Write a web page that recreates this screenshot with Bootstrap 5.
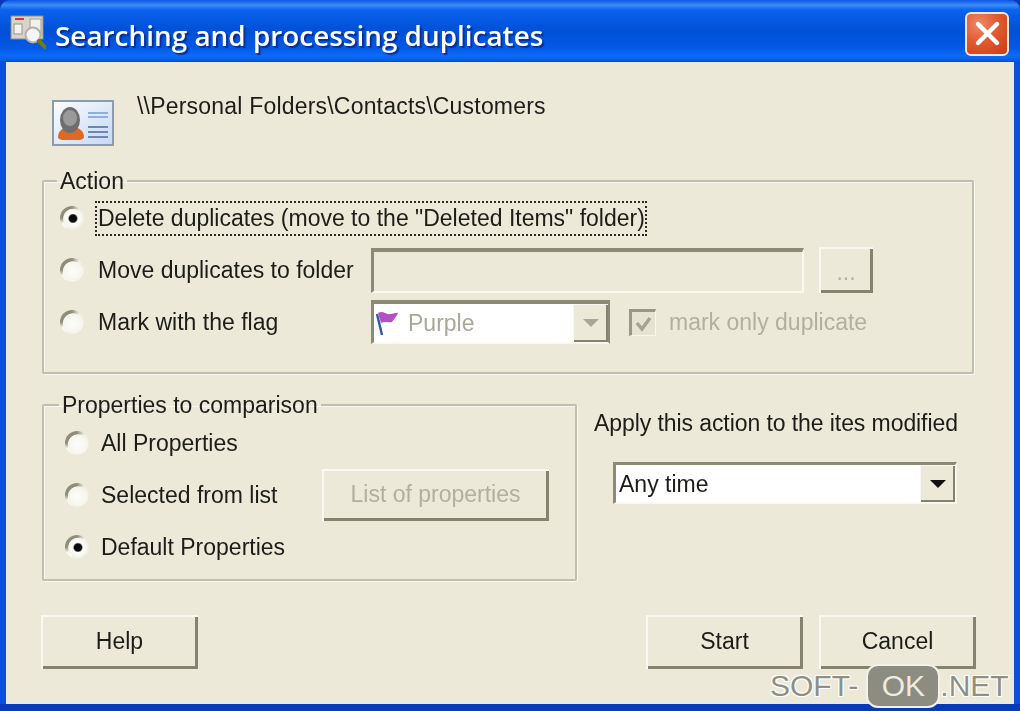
<!DOCTYPE html>
<html lang="en">
<head>
<meta charset="utf-8">
<title>Searching and processing duplicates</title>
<link href="https://cdn.jsdelivr.net/npm/bootstrap@5.3.0/dist/css/bootstrap.min.css" rel="stylesheet">
<style>
html,body{margin:0;height:711px;overflow:hidden;background:#0a3ab8}
body{font-family:"Liberation Sans",sans-serif;font-size:23px;line-height:26px;color:#1c1c18}
.xp-win{position:relative;width:1020px;height:711px;background:#0a4fe0;border-radius:10px 10px 0 0}
.xp-title{height:62px;padding:8px 11px 0 10px;background:linear-gradient(180deg,#0a55e6 0,#3d8cf5 5px,#0a62ee 10px,#0050d8 30px,#0459e4 48px,#0a6cfa 56px,#0858e0 61px,#0a3fc0 62px);border-radius:10px 10px 0 0}
.xp-appicon{margin-top:-6px;flex:none}
.xp-title-text{font-family:"Open Sans","Noto Sans",sans-serif;font-weight:600;font-size:27.9px;line-height:32px;color:#fff;text-shadow:2px 2px 1px #0a2f96;margin-left:9px;margin-top:-1px;white-space:nowrap}
.xp-close{width:44px;height:44px;padding:0;border:2px solid #f3e6de;border-radius:6px;background:radial-gradient(circle at 30% 25%,#ee8a68 0,#e05a32 45%,#cc3c10 100%);margin-top:-3px}
.xp-pane{height:642px;margin:0 6px;background:#ece9d8;padding:38px 38px 0 36px}
.xp-soft{filter:blur(.5px)}
.xp-foot{height:7px;background:#0a3ab8}
.xp-head{margin-left:10px;height:46px;margin-bottom:23px}
.xp-path{margin-left:23px;margin-top:-7px;white-space:nowrap;letter-spacing:.2px}
.xp-group{border:2px solid #c0bfae;box-shadow:inset 1px 1px 0 #f8f7f0,1px 1px 0 #f8f7f0;border-radius:2px;margin:0}
.xp-group>legend{float:none;width:auto;font-size:23px;line-height:24px;padding:0 3px}
.xp-action{padding:0 0 24px 16px;width:932px}
.xp-action>legend{margin:0 0 -1px -3px}
.xp-props{padding:0 0 6px 21px;width:535px;flex:none}
.xp-props>legend{margin:0 0 0 -6px}
.xp-row{height:52px}
input.xp-radio{appearance:none;-webkit-appearance:none;flex:none;width:24px;height:24px;margin:0;border:0;border-radius:50%;background:radial-gradient(circle at 54% 56%,#fdfdf9 0,#f6f5ec 52%,transparent 56%),conic-gradient(from 210deg,#f8f8f1 0 30deg,#8f8e7a 60deg 150deg,#f0efe5 190deg 360deg)}
input.xp-radio:checked{background:radial-gradient(circle at 54% 52%,#0b0b0b 0,#0b0b0b 20%,#fdfdf9 28%,#f6f5ec 52%,transparent 56%),conic-gradient(from 210deg,#f8f8f1 0 30deg,#8f8e7a 60deg 150deg,#f0efe5 190deg 360deg)}
.xp-lbl{margin-left:14px;white-space:nowrap}
.xp-props .xp-lbl{margin-left:12px}
.xp-lblwide{width:257px}
.xp-lblmid{width:221px}
.xp-focus{outline:2px dotted #2a2a24;outline-offset:0;padding:2px 0 3px 1px;margin-left:13px;white-space:nowrap}
.xp-sunken{border-style:solid;border-width:4px 2px 2px 3px;border-color:#8b8a76 #f8f7f0 #f8f7f0 #8b8a76;border-radius:0}
input.xp-field{height:45px;width:433px;background:#ece9d8;flex:none;margin-left:16px}
input.xp-field:disabled{background:#ece9d8}
.xp-btn{--bs-btn-font-size:23px;--bs-btn-line-height:26px;--bs-btn-padding-x:0;--bs-btn-padding-y:0;--bs-btn-color:#1c1c18;--bs-btn-bg:#ece9d8;--bs-btn-border-width:0;--bs-btn-border-radius:0;--bs-btn-disabled-color:#b1b0a0;--bs-btn-disabled-bg:#ece9d8;--bs-btn-disabled-opacity:1;box-shadow:inset 2px 2px 0 #f9f8f2,inset -3px -3px 0 #85836f;font-family:inherit;padding-bottom:2px}
.xp-dots{width:54px;height:46px;margin-left:15px;padding-top:6px!important;flex:none}
.xp-combo{display:flex;background:#fff;flex:none}
.xp-flagged{width:239px;height:44px;margin-left:16px;border-color:#8b8a76 #8b8a76 #f8f7f0 #8b8a76}
.xp-flagged .xp-val{color:#a9a898;display:flex;align-items:center;gap:8px;padding-left:2px}
.xp-any{width:344px;height:42px;margin-left:19px;margin-top:26px;border-width:3px 2px 2px 3px}
.xp-any .xp-val{display:flex;align-items:center;padding-left:3px}
.xp-arrow{margin-left:auto;width:35px;background:#ece9d8;box-shadow:inset 1px 1px 0 #f9f8f2,inset -2px -2px 0 #85836f;display:flex;align-items:center;justify-content:center}
.xp-tri{width:0;height:0;border-left:8px solid transparent;border-right:8px solid transparent;border-top:8px solid #111}
.xp-tri-off{border-top-color:#a9a898}
input.xp-check{appearance:none;-webkit-appearance:none;flex:none;width:27px;height:27px;margin:0 0 0 19px;border-style:solid;border-width:3px 1px 1px 3px;border-color:#98978a #f8f7f0 #f8f7f0 #98978a;border-radius:0;background-color:#e6e3d3;background-image:url("data:image/svg+xml,%3Csvg xmlns='http://www.w3.org/2000/svg' viewBox='0 0 23 23'%3E%3Cpath d='M5 11l5 6 8-11' fill='none' stroke='%23a3a294' stroke-width='3.4'/%3E%3C/svg%3E")}
.xp-muted{color:#b1b0a0;margin-left:13px;white-space:nowrap}
.xp-mid{margin-top:19px}
.xp-right{margin-left:17px;padding-top:17px}
.xp-applylbl{white-space:nowrap;letter-spacing:-.08px}
.xp-bottom{margin-top:34px;margin-left:-1px}
.xp-bigbtn{width:157px;height:54px}
.xp-list{width:227px;height:52px;flex:none}
.xp-mark{position:absolute;left:770px;top:664px;height:44px;display:flex;align-items:center;font-family:"Liberation Sans",sans-serif;font-size:30px;color:#8f8f83;text-shadow:-1px -1px 0 #fff,1px -1px 0 #fff,-1px 1px 0 #fff,1px 1px 0 #fff}
.xp-pill{width:74px;height:44px;margin:0 0 0 8px;background:#8d8c80;border:2px solid #f2f1ea;border-radius:12px;color:#ecebdf;text-shadow:none;text-align:center;line-height:40px}
</style>
</head>
<body>
<div class="xp-win">
  <div class="xp-title xp-soft d-flex align-items-center">
    <svg class="xp-appicon" width="36" height="36" viewBox="0 0 36 36" aria-hidden="true">
      <rect x="1" y="2" width="32" height="23" fill="#d8d4cc" stroke="#8f8a84"/>
      <rect x="5" y="4" width="9" height="2" fill="#d8342a"/>
      <rect x="4" y="10" width="8" height="10" fill="#f4f2ee" stroke="#98938c"/>
      <rect x="20" y="5" width="11" height="16" fill="#f2f0ea" stroke="#a09b94"/>
      <circle cx="23" cy="21" r="7.5" fill="#f5f5f5" stroke="#b5b1a8" stroke-width="2"/>
      <path d="M29 27l6 6" stroke="#6f7a18" stroke-width="4" stroke-linecap="round"/>
    </svg>
    <div class="xp-title-text flex-grow-1">Searching and processing duplicates</div>
    <button class="xp-close d-flex align-items-center justify-content-center" aria-label="Close">
      <svg width="29" height="29" viewBox="0 0 29 29"><path d="M5 5l19 19M24 5L5 24" stroke="#fff" stroke-width="4.4" stroke-linecap="round"/></svg>
    </button>
  </div>
  <div class="xp-pane xp-soft">
    <div class="xp-head d-flex">
      <svg width="62" height="46" viewBox="0 0 62 46" aria-hidden="true">
        <defs><linearGradient id="cg" x1="0" y1="0" x2="1" y2="1"><stop offset="0" stop-color="#fbfdff"/><stop offset="1" stop-color="#c5d8f2"/></linearGradient></defs>
        <rect x="1" y="1" width="60" height="44" fill="url(#cg)" stroke="#8d9bb0" stroke-width="2"/>
        <path d="M6 37c0-6 5-9 8-10h9c4 1 9 4 9 10 0 2-3 3-5 3H11c-2 0-5-1-5-3z" fill="#dd6a24"/>
        <ellipse cx="18" cy="20" rx="10" ry="13" fill="#6e6e6e"/>
        <ellipse cx="18" cy="18" rx="7" ry="8" fill="#9a9a9a"/>
        <path d="M36 13h20M36 17h20" stroke="#8eaee6" stroke-width="2"/>
        <path d="M36 27h20M36 32h20M36 37h20" stroke="#6d86b4" stroke-width="2"/>
      </svg>
      <div class="xp-path">\\Personal Folders\Contacts\Customers</div>
    </div>

    <fieldset class="xp-group xp-action">
      <legend>Action</legend>
      <div class="xp-row d-flex align-items-center">
        <input class="xp-radio" type="radio" name="act" checked aria-label="Delete duplicates">
        <span class="xp-focus">Delete duplicates (move to the "Deleted Items" folder)</span>
      </div>
      <div class="xp-row d-flex align-items-center">
        <input class="xp-radio" type="radio" name="act" aria-label="Move duplicates to folder">
        <span class="xp-lbl xp-lblwide">Move duplicates to folder</span>
        <input class="xp-field xp-sunken form-control" type="text" disabled aria-label="Folder">
        <button class="btn xp-btn xp-dots" disabled>...</button>
      </div>
      <div class="xp-row d-flex align-items-center">
        <input class="xp-radio" type="radio" name="act" aria-label="Mark with the flag">
        <span class="xp-lbl xp-lblwide">Mark with the flag</span>
        <div class="xp-combo xp-flagged xp-sunken">
          <div class="xp-val">
            <svg width="24" height="27" viewBox="0 0 24 27" aria-hidden="true"><path d="M6 25L1 4" stroke="#2f5a9c" stroke-width="2.4"/><path d="M2 3c5-3 8 2 12 1 3 0 6-2 8-1-1 3-4 6-6 9-4 1-7-1-11 1z" fill="#b64fc4"/></svg>
            <span>Purple</span>
          </div>
          <div class="xp-arrow"><span class="xp-tri xp-tri-off"></span></div>
        </div>
        <input class="xp-check" type="checkbox" checked disabled aria-label="mark only duplicate">
        <span class="xp-muted">mark only duplicate</span>
      </div>
    </fieldset>

    <div class="xp-mid d-flex">
      <fieldset class="xp-group xp-props">
        <legend>Properties to comparison</legend>
        <div class="xp-row d-flex align-items-center">
          <input class="xp-radio" type="radio" name="prop" aria-label="All Properties">
          <span class="xp-lbl">All Properties</span>
        </div>
        <div class="xp-row d-flex align-items-center">
          <input class="xp-radio" type="radio" name="prop" aria-label="Selected from list">
          <span class="xp-lbl xp-lblmid">Selected from list</span>
          <button class="btn xp-btn xp-list" disabled>List of properties</button>
        </div>
        <div class="xp-row d-flex align-items-center">
          <input class="xp-radio" type="radio" name="prop" checked aria-label="Default Properties">
          <span class="xp-lbl">Default Properties</span>
        </div>
      </fieldset>
      <div class="xp-right">
        <div class="xp-applylbl">Apply this action to the ites modified</div>
        <div class="xp-combo xp-any xp-sunken">
          <div class="xp-val">Any time</div>
          <div class="xp-arrow"><span class="xp-tri"></span></div>
        </div>
      </div>
    </div>

    <div class="xp-bottom d-flex">
      <button class="btn xp-btn xp-bigbtn">Help</button>
      <button class="btn xp-btn xp-bigbtn ms-auto">Start</button>
      <button class="btn xp-btn xp-bigbtn ms-3">Cancel</button>
    </div>
  </div>
  <div class="xp-foot"></div>
  <div class="xp-mark"><span>SOFT-</span><span class="xp-pill">OK</span><span>.NET</span></div>
</div>
</body>
</html>
